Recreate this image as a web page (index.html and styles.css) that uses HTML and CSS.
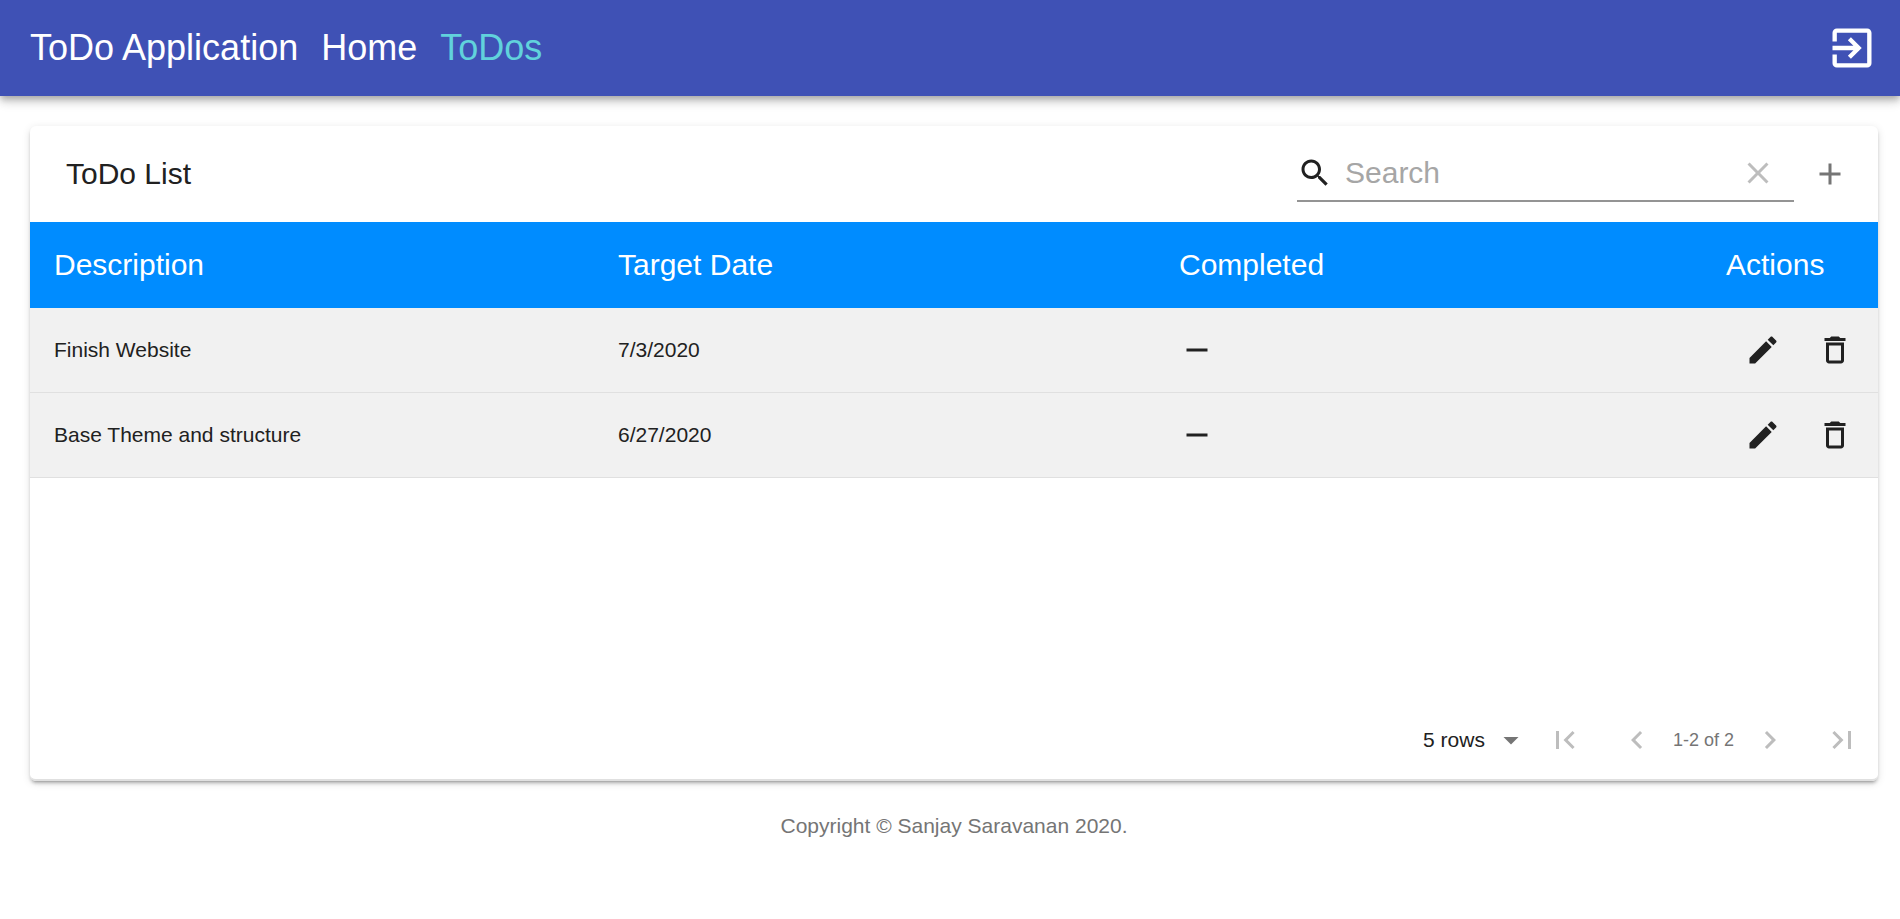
FILE: index.html
```html
<!DOCTYPE html>
<html lang="en">
<head>
<meta charset="utf-8">
<meta name="viewport" content="width=device-width, initial-scale=1">
<title>ToDo Application</title>
<link rel="stylesheet" href="styles.css">
</head>
<body>
<header class="app-bar">
  <nav class="nav">
    <a href="#">ToDo Application</a>
    <a href="#">Home</a>
    <a href="#" class="active" aria-current="page">ToDos</a>
  </nav>
  <button type="button" class="logout" aria-label="Log out">
    <svg viewBox="0 0 24 24"><path d="M10.09 15.59L11.5 17l5-5-5-5-1.41 1.41L12.67 11H3v2h9.67l-2.58 2.59zM19 3H5c-1.11 0-2 .9-2 2v4h2V5h14v14H5v-4H3v4c0 1.1.89 2 2 2h14c1.1 0 2-.9 2-2V5c0-1.1-.9-2-2-2z"/></svg>
  </button>
</header>
<main class="main">
  <section class="card">
    <div class="toolbar">
      <h1 class="title">ToDo List</h1>
      <div class="search">
        <svg class="icon" viewBox="0 0 24 24"><path d="M15.5 14h-.79l-.28-.27C15.41 12.59 16 11.11 16 9.5 16 5.91 13.09 3 9.5 3S3 5.91 3 9.5 5.91 16 9.5 16c1.61 0 3.09-.59 4.23-1.57l.27.28v.79l5 4.99L20.49 19l-4.99-5zm-6 0C7.01 14 5 11.99 5 9.5S7.01 5 9.5 5 14 7.01 14 9.5 11.99 14 9.5 14z"/></svg>
        <input type="text" placeholder="Search" aria-label="Search">
        <button type="button" class="icon-button" disabled aria-label="Clear search">
          <svg class="icon" viewBox="0 0 24 24"><path d="M19 6.41L17.59 5 12 10.59 6.41 5 5 6.41 10.59 12 5 17.59 6.41 19 12 13.41 17.59 19 19 17.59 13.41 12z"/></svg>
        </button>
      </div>
      <button type="button" class="icon-button add" aria-label="Add">
        <svg class="icon" viewBox="0 0 24 24"><path d="M19 13h-6v6h-2v-6H5v-2h6V5h2v6h6v2z"/></svg>
      </button>
    </div>
    <table class="table">
      <colgroup><col class="col-description"><col class="col-date"><col><col class="col-actions"></colgroup>
      <thead>
        <tr><th>Description</th><th>Target Date</th><th>Completed</th><th class="actions-head">Actions</th></tr>
      </thead>
      <tbody>
        <tr>
          <td>Finish Website</td>
          <td>7/3/2020</td>
          <td><svg class="icon" viewBox="0 0 24 24" role="img" aria-label="Not completed"><path d="M19 13H5v-2h14v2z"/></svg></td>
          <td class="actions">
            <div class="action-list">
              <button type="button" class="icon-button" aria-label="Edit"><svg class="icon" viewBox="0 0 24 24"><path d="M3 17.25V21h3.75L17.81 9.94l-3.75-3.75L3 17.25zM20.71 7.04c.39-.39.39-1.02 0-1.41l-2.34-2.34c-.39-.39-1.02-.39-1.41 0l-1.83 1.83 3.75 3.75 1.83-1.83z"/></svg></button>
              <button type="button" class="icon-button" aria-label="Delete"><svg class="icon" viewBox="0 0 24 24"><path d="M6 19c0 1.1.9 2 2 2h8c1.1 0 2-.9 2-2V7H6v12zM8 9h8v10H8V9zm7.5-5l-1-1h-5l-1 1H5v2h14V4h-3.5z"/></svg></button>
            </div>
          </td>
        </tr>
        <tr>
          <td>Base Theme and structure</td>
          <td>6/27/2020</td>
          <td><svg class="icon" viewBox="0 0 24 24" role="img" aria-label="Not completed"><path d="M19 13H5v-2h14v2z"/></svg></td>
          <td class="actions">
            <div class="action-list">
              <button type="button" class="icon-button" aria-label="Edit"><svg class="icon" viewBox="0 0 24 24"><path d="M3 17.25V21h3.75L17.81 9.94l-3.75-3.75L3 17.25zM20.71 7.04c.39-.39.39-1.02 0-1.41l-2.34-2.34c-.39-.39-1.02-.39-1.41 0l-1.83 1.83 3.75 3.75 1.83-1.83z"/></svg></button>
              <button type="button" class="icon-button" aria-label="Delete"><svg class="icon" viewBox="0 0 24 24"><path d="M6 19c0 1.1.9 2 2 2h8c1.1 0 2-.9 2-2V7H6v12zM8 9h8v10H8V9zm7.5-5l-1-1h-5l-1 1H5v2h14V4h-3.5z"/></svg></button>
            </div>
          </td>
        </tr>
      </tbody>
    </table>
    <div class="pagination">
      <div class="rows-select">
        <select aria-label="Rows per page"><option>5 rows</option><option>10 rows</option><option>20 rows</option></select>
        <svg class="icon" viewBox="0 0 24 24"><path d="M7 10l5 5 5-5z"/></svg>
      </div>
      <button type="button" class="icon-button" disabled aria-label="First page"><svg class="icon" viewBox="0 0 24 24"><path d="M18.41 16.59L13.82 12l4.59-4.59L17 6l-6 6 6 6zM6 6h2v12H6z"/></svg></button>
      <button type="button" class="icon-button" disabled aria-label="Previous page"><svg class="icon" viewBox="0 0 24 24"><path d="M15.41 7.41L14 6l-6 6 6 6 1.41-1.41L10.83 12z"/></svg></button>
      <span class="range">1-2 of 2</span>
      <button type="button" class="icon-button" disabled aria-label="Next page"><svg class="icon" viewBox="0 0 24 24"><path d="M10 6L8.59 7.41 13.17 12l-4.58 4.59L10 18l6-6z"/></svg></button>
      <button type="button" class="icon-button" disabled aria-label="Last page"><svg class="icon" viewBox="0 0 24 24"><path d="M5.59 7.41L10.18 12l-4.59 4.59L7 18l6-6-6-6zM16 6h2v12h-2z"/></svg></button>
    </div>
  </section>
</main>
<footer class="copyright">Copyright © Sanjay Saravanan 2020.</footer>
</body>
</html>
```
FILE: styles.css
```css
* {
  box-sizing: border-box;
}

body {
  margin: 0;
  background: #fff;
  color: #212121;
  font-family: "Liberation Sans", Arial, sans-serif;
  font-size: 21px;
  line-height: 30px;
}

button,
input,
select {
  margin: 0;
  padding: 0;
  border: 0;
  background: none;
  color: inherit;
  font: inherit;
}

.app-bar {
  display: flex;
  align-items: center;
  justify-content: space-between;
  min-height: 96px;
  padding: 0 22px 0 30px;
  background: #3f51b5;
  color: #fff;
  box-shadow: 0 3px 6px -1px rgba(0, 0, 0, .2), 0 6px 8px rgba(0, 0, 0, .14), 0 2px 15px rgba(0, 0, 0, .12);
}

.nav {
  display: flex;
  gap: 23px;
  font-size: 36px;
  line-height: 48px;
}

.nav a {
  color: inherit;
  text-decoration: none;
}

.nav .active {
  color: #61d2dc;
}

.logout svg {
  display: block;
  width: 52px;
  height: 52px;
  fill: currentColor;
}

.icon {
  display: block;
  flex: none;
  width: 36px;
  height: 36px;
  fill: currentColor;
}

.icon-button {
  display: flex;
  align-items: center;
  justify-content: center;
  width: 72px;
  height: 72px;
  flex: none;
}

.icon-button:disabled {
  color: #bdbdbd;
}

.main {
  padding: 30px 22px 0 30px;
}

.card {
  border-radius: 6px;
  background: #fff;
  box-shadow: 0 4px 2px -3px rgba(0, 0, 0, .2), 0 3px 3px rgba(0, 0, 0, .14), 0 2px 8px rgba(0, 0, 0, .12);
}

.toolbar {
  display: flex;
  align-items: center;
  min-height: 96px;
  padding: 0 12px 0 36px;
}

.title {
  flex: 1;
  margin: 0;
  font-size: 30px;
  font-weight: 400;
  line-height: 48px;
}

.search {
  display: flex;
  align-items: center;
  width: 497px;
  height: 56px;
  border-bottom: 2px solid #949494;
}

.search input {
  flex: 1;
  min-width: 0;
  padding-left: 12px;
  font-size: 30px;
  line-height: 36px;
  outline: 0;
}

.search input::placeholder {
  color: #a6a6a6;
  opacity: 1;
}

.add {
  color: #757575;
}

.table {
  width: 100%;
  border-collapse: separate;
  border-spacing: 0;
  table-layout: fixed;
}

.col-description {
  width: 564px;
}

.col-date {
  width: 561px;
}

.col-actions {
  width: 172px;
}

.table th {
  height: 86px;
  padding: 0 24px;
  background: #008cff;
  color: #fff;
  font-size: 30px;
  font-weight: 400;
  text-align: left;
}

.table .actions-head {
  padding: 0 20px;
}

.table td {
  height: 85px;
  padding: 0 24px;
  border-bottom: 1px solid #e0e0e0;
  background: #f1f1f1;
}

.table .actions {
  padding: 0 7px 0 0;
}

.action-list {
  display: flex;
  justify-content: flex-end;
}

.pagination {
  display: flex;
  align-items: center;
  justify-content: flex-end;
  margin-top: 223px;
  min-height: 80px;
  border-bottom: 2px solid #e0e0e0;
  border-radius: 0 0 6px 6px;
}

.rows-select {
  display: grid;
  align-items: center;
  justify-items: end;
  color: #757575;
}

.rows-select select,
.rows-select .icon {
  grid-area: 1 / 1;
}

.rows-select select {
  appearance: none;
  padding-right: 44px;
  color: #212121;
  text-align-last: right;
}

.rows-select .icon {
  pointer-events: none;
}

.range {
  color: #757575;
  font-size: 18px;
}

.copyright {
  padding: 30px 22px 0 30px;
  color: #757575;
  text-align: center;
}
```
